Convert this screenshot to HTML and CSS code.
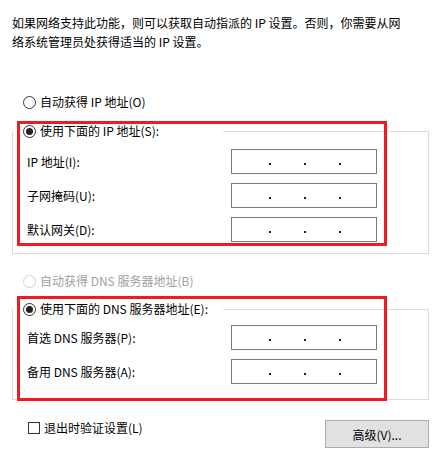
FILE: index.html
```
<!DOCTYPE html>
<html lang="zh-CN">
<head>
<meta charset="utf-8">
<link rel="stylesheet" href="styles.css">
</head>
<body>
<div class="page">
  <p class="intro">如果网络支持此功能，则可以获取自动指派的 IP 设置。否则，你需要从网络系统管理员处获得适当的 IP 设置。</p>

  <div class="opt opt-first"><span class="radio"></span><span>自动获得 IP 地址(O)</span></div>

  <div class="group group-ip">
    <div class="head"><span class="radio checked"></span><span>使用下面的 IP 地址(S):</span></div>
    <div class="rows">
      <div class="row"><span>IP 地址(I):</span><div class="ip"><i></i><i></i><i></i></div></div>
      <div class="row"><span>子网掩码(U):</span><div class="ip"><i></i><i></i><i></i></div></div>
      <div class="row"><span>默认网关(D):</span><div class="ip"><i></i><i></i><i></i></div></div>
    </div>
  </div>

  <div class="opt opt-dns disabled"><span class="radio"></span><span>自动获得 DNS 服务器地址(B)</span></div>

  <div class="group group-dns">
    <div class="head"><span class="radio checked"></span><span>使用下面的 DNS 服务器地址(E):</span></div>
    <div class="rows">
      <div class="row"><span>首选 DNS 服务器(P):</span><div class="ip"><i></i><i></i><i></i></div></div>
      <div class="row"><span>备用 DNS 服务器(A):</span><div class="ip"><i></i><i></i><i></i></div></div>
    </div>
  </div>

  <div class="footer">
    <div class="check"><span class="box"></span><span>退出时验证设置(L)</span></div>
    <div class="btn">高级(V)...</div>
  </div>

  <div class="mark mark-ip"></div>
  <div class="mark mark-dns"></div>
</div>
</body>
</html>
```

FILE: styles.css
```
html, body {
  margin: 0;
  background: #ffffff;
}
body {
  font-family: "Noto Sans CJK SC", "Noto Sans", sans-serif;
  font-size: 12px;
  color: #000;
}
.page {
  position: relative;
  box-sizing: border-box;
  padding: 13px 12px 0 12px;
  width: 441px;
  height: 463px;
  overflow: hidden;
}
.intro {
  margin: 0;
  line-height: 19px;
  width: 396px;
}
.opt {
  display: flex;
  align-items: center;
  height: 16px;
  gap: 4px;
  padding-left: 11px;
  line-height: 16px;
}
.opt-first { margin-top: 43px; }
.opt-dns { margin-top: 19px; }
.disabled { color: #a0a0a0; }
.radio {
  box-sizing: border-box;
  width: 13px;
  height: 13px;
  border: 1px solid #333;
  border-radius: 50%;
  background: #fff;
  display: flex;
  align-items: center;
  justify-content: center;
  flex: none;
}
.disabled .radio { border-color: #cfcfcf; }
.radio.checked::after {
  content: "";
  width: 7px;
  height: 7px;
  border-radius: 50%;
  background: #222;
}
.group {
  border: 1px solid #dcdcdc;
}
.group-ip { margin-top: 21px; padding-bottom: 11px; }
.group-dns { margin-top: 20px; padding-bottom: 15px; }
.head {
  position: relative;
  display: flex;
  align-items: center;
  gap: 4px;
  width: 200px;
  height: 16px;
  line-height: 16px;
  margin-top: -9px;
  padding-left: 10px;
  background: #fff;
}
.rows {
  display: flex;
  flex-direction: column;
  gap: 9px;
  padding: 0 51px 0 14px;
}
.group-ip .rows { margin-top: 10px; }
.group-dns .rows { margin-top: 8px; }
.row {
  display: grid;
  grid-template-columns: 1fr 146px;
  align-items: center;
  height: 25px;
}
.ip {
  box-sizing: border-box;
  height: 25px;
  border: 1px solid #7a7a7a;
  display: flex;
  align-items: center;
  padding-left: 37px;
  gap: 33px;
}
.ip i {
  width: 2px;
  height: 2px;
  background: #222;
  margin-top: 4px;
}
.footer {
  display: flex;
  justify-content: space-between;
  align-items: flex-start;
  margin-top: 20px;
}
.check {
  display: flex;
  align-items: center;
  gap: 4px;
  height: 16px;
  line-height: 16px;
  padding-left: 16px;
}
.box {
  box-sizing: border-box;
  width: 12px;
  height: 12px;
  border: 1px solid #333;
  background: #fff;
}
.btn {
  box-sizing: border-box;
  width: 104px;
  height: 28px;
  border: 1px solid #adadad;
  background: #e1e1e1;
  display: flex;
  align-items: center;
  justify-content: center;
}
.mark {
  position: absolute;
  left: 17px;
  width: 370px;
  box-sizing: border-box;
  border: 3px solid #ed1c24;
}
.mark-ip { top: 121px; height: 125px; }
.mark-dns { top: 296px; height: 105px; }
```
